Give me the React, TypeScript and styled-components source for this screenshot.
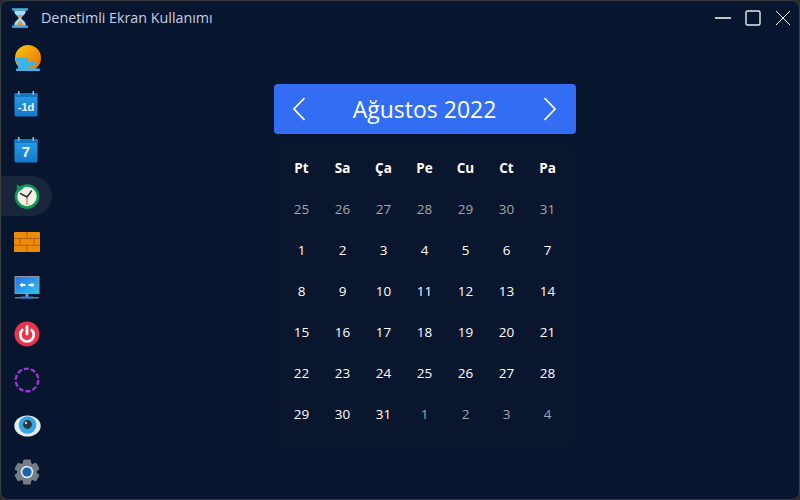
import React from 'react'
import styled, { createGlobalStyle } from 'styled-components'

const GlobalStyle = createGlobalStyle`
  html, body {
    margin: 0;
    padding: 0;
    background: #2b2b2b;
  }
  * {
    box-sizing: border-box;
  }
`

const Window = styled.div`
  width: 800px;
  height: 500px;
  background: #08152e;
  border: 1px solid #3a3c40;
  border-radius: 8px;
  overflow: hidden;
  display: flex;
  flex-direction: column;
  font-family: 'Open Sans', 'Noto Sans', 'Liberation Sans', sans-serif;
`

const TitleBar = styled.div`
  height: 37px;
  flex: none;
  display: flex;
  align-items: center;
  padding: 0 1px 4px 11px;
`

const TitleText = styled.div`
  margin-left: 13px;
  font-size: 14.3px;
  color: #c6d0e2;
`

const WindowButtons = styled.div`
  margin-left: auto;
  display: flex;
  align-items: center;
`

const WindowButton = styled.div`
  width: 30px;
  height: 32px;
  display: flex;
  align-items: center;
  justify-content: center;
`

const Body = styled.div`
  flex: 1;
  display: flex;
  min-height: 0;
`

const Sidebar = styled.div`
  width: 52px;
  flex: none;
  display: flex;
  flex-direction: column;
`

const NavItem = styled.div<{ $active?: boolean }>`
  height: 40px;
  margin-bottom: 6px;
  width: 51px;
  display: flex;
  align-items: center;
  padding-left: 13px;
  border-radius: 0 20px 20px 0;
  background: ${(p) => (p.$active ? '#18253b' : 'transparent')};
`

const Main = styled.div`
  flex: 1;
  display: flex;
  justify-content: center;
  padding-top: 46px;
  padding-right: 3px;
`

const Calendar = styled.div`
  width: 302px;
`

const MonthHeader = styled.div`
  height: 50px;
  background: #336df4;
  border-radius: 4px;
  display: flex;
  align-items: center;
  justify-content: space-between;
  padding: 0 19px;
  color: #fff;
`

const MonthLabel = styled.div`
  font-size: 23px;
  line-height: 30px;
`

const DayGrid = styled.div`
  display: grid;
  grid-template-columns: repeat(7, 41px);
  grid-auto-rows: 41px;
  justify-content: center;
  margin-top: 13px;
  padding-bottom: 10px;
  background: #0a162e;
  border-radius: 6px;
`

const Cell = styled.div<{ $muted?: boolean; $head?: boolean }>`
  display: flex;
  align-items: center;
  justify-content: center;
  font-size: 13.5px;
  font-weight: ${(p) => (p.$head ? 700 : 400)};
  color: ${(p) => (p.$muted ? '#a2a5ab' : '#ffffff')};
`

const HourglassIcon = () => (
  <svg width="16" height="20" viewBox="0 0 18 22">
    <rect x="0" y="0" width="18" height="2.500" fill="#3fb4ee" />
    <rect x="0" y="19.500" width="18" height="2.500" fill="#3fb4ee" />
    <path d="M2.500 2.500h13c0 5-4 6-5.100 8.500 1.100 2.500 5.100 3.500 5.100 8.500h-13c0-5 4-6 5.100-8.500C6.500 8.500 2.500 7.500 2.500 2.500z" fill="#9fdcf5" />
    <path d="M5.500 7.500h7L9.600 10.500H8.400zM9 13.500l4.500 6h-9z" fill="#e8963c" />
  </svg>
)

const SunsetIcon = () => (
  <svg width="28" height="28" viewBox="0 0 28 28">
    <defs>
      <linearGradient id="sunset" x1="0" y1="0" x2="1" y2="1">
        <stop offset="0" stopColor="#fcc80a" />
        <stop offset="1" stopColor="#e96c02" />
      </linearGradient>
    </defs>
    <circle cx="14" cy="14" r="13" fill="url(#sunset)" />
    <path d="M2 13.500h12V18h8v4h-6v2.500H4V18H2z" fill="#3cb4ea" />
    <path d="M6 24.500h16a13 13 0 0 1-3 2H9z" fill="#3cb4ea" />
    <rect x="2" y="24.500" width="24" height="2.500" rx="1" fill="#3cb4ea" />
  </svg>
)

const CalendarIcon = ({ label, size }: { label: string; size: number }) => (
  <svg width="24" height="26" viewBox="0 0 24 26">
    <defs>
      <linearGradient id={`cal${label}`} x1="0" y1="0" x2="0" y2="1">
        <stop offset="0" stopColor="#2a9fea" />
        <stop offset="1" stopColor="#1278cc" />
      </linearGradient>
    </defs>
    <rect x="0.500" y="2" width="23" height="23.500" rx="1.500" fill={`url(#cal${label})`} />
    <rect x="0.500" y="2" width="23" height="4" rx="1" fill="#1477c4" />
    <rect x="4" y="0" width="1.500" height="4" fill="#7cc8f2" />
    <rect x="18.500" y="0" width="1.500" height="4" fill="#7cc8f2" />
    <text x="12" y="19.500" textAnchor="middle" fontSize={size} fontWeight="700" fill="#f1f7fc" fontFamily="'Liberation Sans', sans-serif">
      {label}
    </text>
  </svg>
)

const ClockIcon = () => (
  <svg width="26" height="26" viewBox="0 0 26 26">
    <circle cx="13" cy="13.500" r="11" fill="#f2efe6" stroke="#0e9a54" strokeWidth="2.600" />
    <path d="M2.500 1.500l1 8 6.500-4.500z" fill="#0e9a54" />
    <path d="M13 14v8" stroke="#e39b78" strokeWidth="1.800" />
    <path d="M13 14L6.500 10.500M13 14l4.500-6" stroke="#333" strokeWidth="1.500" strokeLinecap="round" />
  </svg>
)

const WallIcon = () => (
  <svg width="26" height="20" viewBox="0 0 26 20">
    <rect width="26" height="20" rx="1" fill="#ee8a08" />
    <path d="M0 6.500h26M0 13.300h26M13 0v6.500M6 6.500v6.800M20 6.500v6.800M13 13.300V20" stroke="#a85e0c" strokeWidth="0.900" />
  </svg>
)

const MonitorIcon = () => (
  <svg width="26" height="24" viewBox="0 0 26 24">
    <defs>
      <linearGradient id="screen" x1="0" y1="0" x2="1" y2="1">
        <stop offset="0" stopColor="#2a6ef0" />
        <stop offset="1" stopColor="#26c6ea" />
      </linearGradient>
    </defs>
    <rect x="1" y="0.500" width="24" height="17" fill="url(#screen)" stroke="#8b97a6" />
    <path d="M7 9h4.500M14.500 9H19" stroke="#fff" strokeWidth="1.800" />
    <path d="M8.500 6.500L5.500 9l3 2.500zM17.500 6.500l3 2.500-3 2.500z" fill="#fff" />
    <rect x="11.500" y="18" width="3" height="3" fill="#8b97a6" />
    <rect x="1" y="21" width="24" height="1.500" fill="#6f7a88" />
    <rect x="7" y="20.500" width="12" height="2" fill="#1f84ea" />
  </svg>
)

const PowerIcon = () => (
  <svg width="26" height="26" viewBox="0 0 26 26">
    <circle cx="13" cy="13" r="12.500" fill="#e9344a" />
    <path d="M8.300 9a6.700 6.700 0 1 0 9.400 0" fill="none" stroke="#fff" strokeWidth="2.600" strokeLinecap="round" />
    <path d="M13 5.500v7.500" stroke="#fff" strokeWidth="2.800" strokeLinecap="round" />
  </svg>
)

const DashedCircleIcon = () => (
  <svg width="26" height="26" viewBox="0 0 26 26">
    <circle cx="13" cy="13" r="11.300" fill="none" stroke="#9a34d8" strokeWidth="2.400" strokeDasharray="5 2.100" />
  </svg>
)

const EyeIcon = () => (
  <svg width="27" height="22" viewBox="0 0 27 22">
    <ellipse cx="13.500" cy="11" rx="13.200" ry="10.500" fill="#e4eaee" />
    <circle cx="13.500" cy="10" r="8.800" fill="#2fa8e6" />
    <circle cx="13.500" cy="9.500" r="4.400" fill="#33343a" />
    <circle cx="12" cy="8" r="1.200" fill="#cfd4da" />
  </svg>
)

const GearIcon = () => (
  <svg width="26" height="26" viewBox="0 0 26 26">
    <circle cx="13" cy="13" r="10" fill="#747d88" />
    {[0, 60, 120, 180, 240, 300].map((a) => (
      <rect key={a} x="9" y="0.500" width="8" height="6" rx="1.500" fill="#747d88" transform={`rotate(${a} 13 13)`} />
    ))}
    <circle cx="13" cy="13" r="6.300" fill="#dde6ee" />
    <circle cx="13" cy="13" r="4.600" fill="#1a64ad" />
  </svg>
)

const ArrowIcon = ({ d }: { d: string }) => (
  <svg width="12" height="24" viewBox="0 0 12 24">
    <path d={d} fill="none" stroke="#fff" strokeWidth="1.700" />
  </svg>
)

const headers = ['Pt', 'Sa', 'Ça', 'Pe', 'Cu', 'Ct', 'Pa']

const days: { day: number; muted?: boolean }[] = [
  ...[25, 26, 27, 28, 29, 30, 31].map((day) => ({ day, muted: true })),
  ...Array.from({ length: 31 }, (_, i) => ({ day: i + 1 })),
  ...[1, 2, 3, 4].map((day) => ({ day, muted: true })),
]

const App = () => {
  return (
    <>
      <GlobalStyle />
      <Window>
        <TitleBar>
          <HourglassIcon />
          <TitleText>Denetimli Ekran Kullanımı</TitleText>
          <WindowButtons>
            <WindowButton>
              <svg width="16" height="16" viewBox="0 0 16 16">
                <path d="M0 8h16" stroke="#fff" strokeWidth="1.500" />
              </svg>
            </WindowButton>
            <WindowButton>
              <svg width="16" height="16" viewBox="0 0 16 16">
                <rect x="1" y="1" width="14" height="14" rx="1.500" fill="none" stroke="#e8ecf2" strokeWidth="1.400" />
              </svg>
            </WindowButton>
            <WindowButton>
              <svg width="16" height="16" viewBox="0 0 16 16">
                <path d="M1 1l14 14M15 1L1 15" stroke="#fff" strokeWidth="1" />
              </svg>
            </WindowButton>
          </WindowButtons>
        </TitleBar>
        <Body>
          <Sidebar>
            <NavItem><SunsetIcon /></NavItem>
            <NavItem><CalendarIcon label="-1d" size={11} /></NavItem>
            <NavItem><CalendarIcon label="7" size={15} /></NavItem>
            <NavItem $active><ClockIcon /></NavItem>
            <NavItem><WallIcon /></NavItem>
            <NavItem><MonitorIcon /></NavItem>
            <NavItem><PowerIcon /></NavItem>
            <NavItem><DashedCircleIcon /></NavItem>
            <NavItem><EyeIcon /></NavItem>
            <NavItem><GearIcon /></NavItem>
          </Sidebar>
          <Main>
            <Calendar>
              <MonthHeader>
                <ArrowIcon d="M11.500 1L1 12l10.500 11" />
                <MonthLabel>Ağustos 2022</MonthLabel>
                <ArrowIcon d="M.5 1L11 12 .5 23" />
              </MonthHeader>
              <DayGrid>
                {headers.map((h) => (
                  <Cell key={h} $head>{h}</Cell>
                ))}
                {days.map((d, i) => (
                  <Cell key={i} $muted={d.muted}>{d.day}</Cell>
                ))}
              </DayGrid>
            </Calendar>
          </Main>
        </Body>
      </Window>
    </>
  )
}

export default App
